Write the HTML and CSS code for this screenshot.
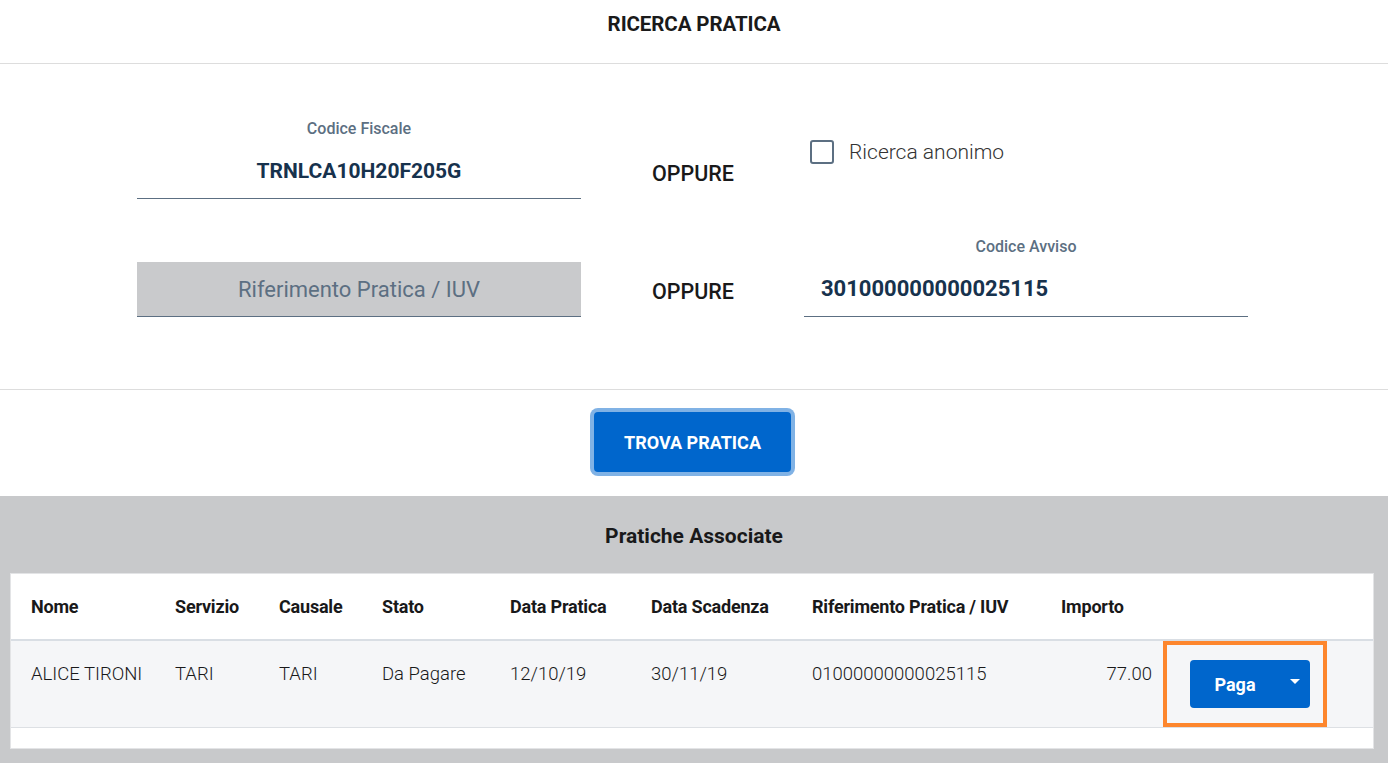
FILE: index.html
```html
<!DOCTYPE html>
<html lang="it">
<head>
<meta charset="utf-8">
<title>Ricerca Pratica</title>
<link rel="stylesheet" href="styles.css">
</head>
<body>
<header class="page-header">
  <h1 class="page-title">RICERCA PRATICA</h1>
</header>

<section class="search-form">
  <div class="form-grid">
    <div class="field">
      <label class="field-label">Codice Fiscale</label>
      <div class="field-input centered">TRNLCA10H20F205G</div>
    </div>
    <div class="or-text">OPPURE</div>
    <div class="check-wrap">
      <span class="checkbox"></span>
      <span class="check-label">Ricerca anonimo</span>
    </div>

    <div class="field">
      <label class="field-label"></label>
      <div class="field-input disabled centered">Riferimento Pratica / IUV</div>
    </div>
    <div class="or-text">OPPURE</div>
    <div class="field">
      <label class="field-label">Codice Avviso</label>
      <div class="field-input left">301000000000025115</div>
    </div>
  </div>
</section>

<section class="actions">
  <button class="btn-primary">TROVA PRATICA</button>
</section>

<section class="results">
  <h2 class="results-title">Pratiche Associate</h2>
  <div class="table-card">
    <table class="results-table">
      <colgroup>
        <col class="c-nome"><col class="c-serv"><col class="c-caus"><col class="c-stato">
        <col class="c-dp"><col class="c-ds"><col class="c-rif"><col class="c-imp">
        <col class="c-act"><col class="c-end">
      </colgroup>
      <thead>
        <tr>
          <th>Nome</th><th>Servizio</th><th>Causale</th><th>Stato</th>
          <th>Data Pratica</th><th>Data Scadenza</th><th>Riferimento Pratica / IUV</th>
          <th>Importo</th><th></th><th></th>
        </tr>
      </thead>
      <tbody>
        <tr>
          <td>ALICE TIRONI</td><td>TARI</td><td>TARI</td><td>Da Pagare</td>
          <td>12/10/19</td><td>30/11/19</td><td>01000000000025115</td>
          <td class="num">77.00</td>
          <td class="action-cell">
            <button class="btn-pay"><span class="pay-text">Paga</span><span class="caret"></span></button>
          </td>
          <td></td>
        </tr>
      </tbody>
    </table>
    <div class="table-foot"></div>
  </div>
</section>
</body>
</html>
```

FILE: styles.css
```css
* { box-sizing: border-box; }

html, body {
  margin: 0;
  padding: 0;
  background: #ffffff;
  font-family: Roboto, "Noto Sans", sans-serif;
  color: #19191a;
}

.page-header {
  height: 64px;
  border-bottom: 1px solid #dddddd;
  display: flex;
  justify-content: center;
  align-items: flex-start;
}

.page-title {
  margin: 12px 0 0;
  font-size: 20.5px;
  line-height: 24px;
  font-weight: 700;
  color: #1a1a1a;
  letter-spacing: -0.1px;
}

.search-form {
  padding: 55px 0 72px;
  border-bottom: 1px solid #dddddd;
}

.form-grid {
  display: grid;
  grid-template-columns: 444px 223px 444px;
  justify-content: center;
  row-gap: 38px;
  padding-right: 3px;
}

.field {
  display: flex;
  flex-direction: column;
}

.field-label {
  height: 20px;
  line-height: 20px;
  margin-bottom: 5px;
  text-align: center;
  font-size: 16px;
  color: #5c6f82;
  font-weight: 500;
}

.field-input {
  height: 55px;
  line-height: 54px;
  border-bottom: 1px solid #5c6f82;
  font-size: 21px;
  font-weight: 700;
  color: #17324d;
}

.field-input.centered { text-align: center; }
.field-input.left { text-align: left; padding-left: 17px; font-size: 22px; }

.field-input.disabled {
  background: #c9cacc;
  font-weight: 400;
  font-size: 22px;
  color: #5c6f82;
  line-height: 56px;
}

.or-text {
  align-self: end;
  padding-left: 71px;
  margin-bottom: 13px;
  font-size: 21.5px;
  line-height: 24px;
  font-weight: 500;
  color: #19191a;
}

.check-wrap {
  display: flex;
  align-items: center;
  gap: 15px;
  padding-left: 6px;
  padding-top: 21px;
  align-self: start;
}

.checkbox {
  width: 24px;
  height: 24px;
  border: 2px solid #5c6f82;
  border-radius: 3px;
  display: inline-block;
}

.check-label {
  font-size: 21px;
  font-weight: 300;
  color: #333333;
}

.actions {
  display: flex;
  justify-content: center;
  padding: 22px 0 24px;
  padding-right: 3px;
}

.btn-primary {
  width: 197px;
  height: 60px;
  border: none;
  border-radius: 4px;
  background: #0066cc;
  color: #ffffff;
  font-family: Roboto, "Noto Sans", sans-serif;
  font-size: 18px;
  font-weight: 700;
  box-shadow: 0 0 0 4px #80b2e5;
}

.results {
  background: #c8c9cb;
  padding: 28px 14px 15px 10px;
}

.results-title {
  margin: 0 0 25px;
  text-align: center;
  font-size: 21px;
  line-height: 24px;
  font-weight: 700;
  color: #19191a;
  padding-left: 4px;
}

.table-card {
  background: #ffffff;
  border: 1px solid #e3e4e6;
}

.results-table {
  width: 100%;
  table-layout: fixed;
  border-collapse: collapse;
}

.c-nome { width: 144px; }
.c-serv { width: 104px; }
.c-caus { width: 103px; }
.c-stato { width: 128px; }
.c-dp { width: 141px; }
.c-ds { width: 161px; }
.c-rif { width: 249px; }
.c-imp { width: 122px; }
.c-act { width: 164px; }
.c-end { width: 46px; }

.results-table th {
  height: 66px;
  padding: 0 0 0 20px;
  text-align: left;
  font-size: 18px;
  font-weight: 700;
  color: #19191a;
  border-bottom: 2px solid #d9dee4;
  white-space: nowrap;
  letter-spacing: -0.2px;
}

.results-table td {
  height: 87px;
  padding: 21px 0 0 20px;
  vertical-align: top;
  font-size: 18.5px;
  line-height: 24px;
  font-weight: 300;
  color: #19191a;
  background: #f5f6f8;
  border-bottom: 1px solid #dde0e4;
  white-space: nowrap;
}

.results-table td.num {
  text-align: right;
  padding-right: 11px;
}

.results-table td.action-cell {
  padding: 19px 0 0 27px;
  box-shadow: inset 0 0 0 4px #fd862d;
}

.btn-pay {
  width: 120px;
  height: 48px;
  border: none;
  border-radius: 4px;
  background: #0066cc;
  color: #ffffff;
  display: flex;
  align-items: center;
  padding: 0 10px 0 0;
  font-family: Roboto, "Noto Sans", sans-serif;
}

.pay-text {
  flex: 1;
  text-align: center;
  font-size: 18px;
  font-weight: 700;
}

.caret {
  width: 0;
  height: 0;
  border-left: 5px solid transparent;
  border-right: 5px solid transparent;
  border-top: 5px solid #ffffff;
  margin-left: 10px;
  margin-bottom: 6px;
}

.table-foot {
  height: 20px;
}
```
